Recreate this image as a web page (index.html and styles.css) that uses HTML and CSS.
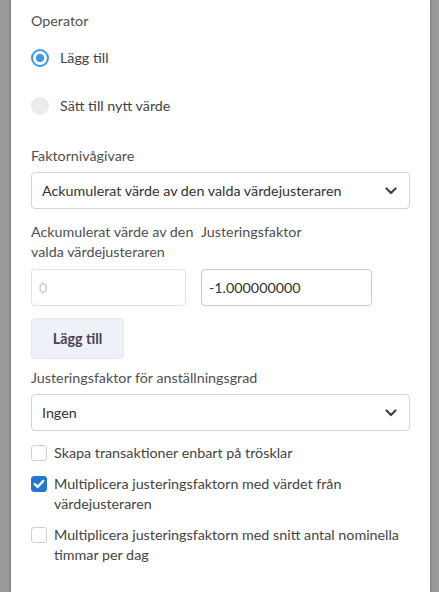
FILE: index.html
```html
<!DOCTYPE html>
<html lang="sv">
<head>
    <meta charset="utf-8">
    <title>Justering</title>
    <link rel="stylesheet" href="styles.css">
</head>
<body>
    <div class="panel">
        <p class="label">Operator</p>
        <div class="radio-group">
            <label class="radio-row">
                <span class="radio checked"></span>
                <span>Lägg till</span>
            </label>
            <label class="radio-row">
                <span class="radio"></span>
                <span>Sätt till nytt värde</span>
            </label>
        </div>

        <p class="label label-top">Faktornivågivare</p>
        <div class="select">
            <span>Ackumulerat värde av den valda värdejusteraren</span>
            <svg class="chevron" width="12" height="8" viewBox="0 0 12 8"><path d="M1.5 1.5 6 6l4.5-4.5" fill="none" stroke="#3f4449" stroke-width="2.2" stroke-linecap="round" stroke-linejoin="round"/></svg>
        </div>

        <div class="pair">
            <div class="col">
                <p class="label">Ackumulerat värde av den valda värdejusteraren</p>
                <div class="input disabled">0</div>
            </div>
            <div class="col">
                <p class="label">Justeringsfaktor</p>
                <div class="input">-1.000000000</div>
            </div>
        </div>

        <button class="btn">Lägg till</button>

        <p class="label label-grade">Justeringsfaktor för anställningsgrad</p>
        <div class="select">
            <span>Ingen</span>
            <svg class="chevron" width="12" height="8" viewBox="0 0 12 8"><path d="M1.5 1.5 6 6l4.5-4.5" fill="none" stroke="#3f4449" stroke-width="2.2" stroke-linecap="round" stroke-linejoin="round"/></svg>
        </div>

        <label class="check-row first">
            <span class="box"></span>
            <span>Skapa transaktioner enbart på trösklar</span>
        </label>
        <label class="check-row">
            <span class="box checked">
                <svg width="12" height="10" viewBox="0 0 12 10"><path d="M1.8 5.2 4.6 8 10.2 2" fill="none" stroke="#fff" stroke-width="2.4" stroke-linecap="round" stroke-linejoin="round"/></svg>
            </span>
            <span>Multiplicera justeringsfaktorn med värdet från värdejusteraren</span>
        </label>
        <label class="check-row">
            <span class="box"></span>
            <span>Multiplicera justeringsfaktorn med snitt antal nominella timmar per dag</span>
        </label>
    </div>
</body>
</html>
```
FILE: styles.css
```css
* {
    box-sizing: border-box;
    margin: 0;
}
body {
    background-color: #9a9a9a;
    font-family: "Lato", sans-serif;
    font-size: 14.3px;
    line-height: 20px;
    color: #444;
}
.panel {
    margin-left: 11px;
    width: 419px;
    min-height: 592px;
    background-color: #fff;
    padding: 11px 20px 0;
    box-shadow: 0 0 3px rgba(0, 0, 0, 0.35);
}
.label {
    color: #505050;
}
.radio-group {
    margin-top: 3px;
}
.radio-row {
    display: flex;
    align-items: center;
    height: 48px;
    gap: 11px;
    color: #444;
}
.radio {
    width: 18px;
    height: 18px;
    border-radius: 50%;
    background-color: #ececec;
    flex-shrink: 0;
}
.radio.checked {
    background-color: #fff;
    border: 2px solid #3a98e6;
    display: flex;
    align-items: center;
    justify-content: center;
}
.radio.checked::after {
    content: "";
    width: 8px;
    height: 8px;
    border-radius: 50%;
    background-color: #3a98e6;
}
.label-top {
    margin-top: 16px;
}
.select {
    margin-top: 6px;
    height: 37px;
    border: 1px solid #d4d4d4;
    border-radius: 4px;
    padding: 0 12px 0 10px;
    display: flex;
    align-items: center;
    justify-content: space-between;
    color: #333;
}
.pair {
    margin-top: 13px;
    display: grid;
    grid-template-columns: 166px 171px;
    column-gap: 4px;
}
.col {
    display: flex;
    flex-direction: column;
    justify-content: space-between;
}
.input {
    margin-top: 7px;
    height: 37px;
    border: 1px solid #c9c9c9;
    border-radius: 4px;
    padding: 0 7px;
    display: flex;
    align-items: center;
    color: #333;
}
.input.disabled {
    width: 155px;
    border-color: #e3e3e3;
    color: #c8c8c8;
}
.btn {
    margin-top: 12px;
    width: 93px;
    height: 41px;
    border: 1px solid #e6e8f0;
    border-radius: 4px;
    background-color: #eff1f9;
    font-family: "Lato", sans-serif;
    font-size: 14.3px;
    font-weight: bold;
    color: #4a4250;
}
.label-grade {
    margin-top: 9px;
}
.check-row {
    display: flex;
    align-items: flex-start;
    gap: 7px;
    margin-top: 11px;
    color: #444;
}
.check-row.first {
    margin-top: 12px;
}
.box {
    width: 16px;
    height: 16px;
    margin-top: 2px;
    border: 1px solid #cfcfcf;
    border-radius: 3px;
    flex-shrink: 0;
}
.box.checked {
    background-color: #2379cf;
    border-color: #2379cf;
    display: flex;
    align-items: center;
    justify-content: center;
}
```
